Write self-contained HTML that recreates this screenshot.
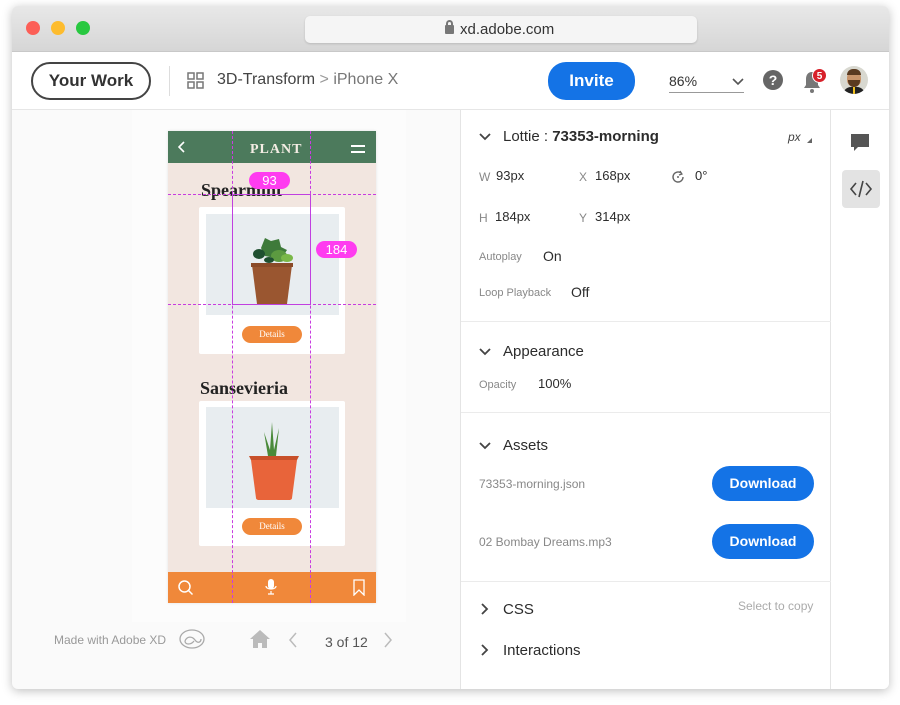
<!DOCTYPE html>
<html><head><style>
*{margin:0;padding:0;box-sizing:border-box}
body{width:900px;height:705px;background:#fff;font-family:"Liberation Sans",sans-serif;position:relative;overflow:hidden;color:#2c2c2c}
.a{position:absolute}
.win{left:12px;top:6px;width:877px;height:683px;border-radius:6px;box-shadow:0 2px 10px rgba(0,0,0,.25);overflow:hidden;background:#fafafa}
.t{font-size:13px;white-space:nowrap}
.lbl{color:#888;font-size:12px}
.btn{background:#1473e6;color:#fff;border-radius:18px;font-weight:bold;text-align:center}
.vd{width:0;border-left:1px dashed #c83ce0}
.hd{height:0;border-top:1px dashed #c83ce0}
</style></head><body>
<div class="a win">
 <div class="a" style="left:0;top:0;width:877px;height:46px;background:linear-gradient(#e8e8e8,#d6d6d6);border-bottom:1px solid #c8c8c8"></div>
 <div class="a" style="left:14px;top:15px;width:14px;height:14px;border-radius:7px;background:#fc5f57"></div>
 <div class="a" style="left:39px;top:15px;width:14px;height:14px;border-radius:7px;background:#fdbc2e"></div>
 <div class="a" style="left:64px;top:15px;width:14px;height:14px;border-radius:7px;background:#28c840"></div>
 <div class="a" style="left:293px;top:10px;width:392px;height:27px;border-radius:5px;background:#f5f5f5;box-shadow:0 1px 2px rgba(0,0,0,.15)"></div>
 <div class="a" style="left:433px;top:19px;width:9px;height:9px;background:#777;border-radius:1px"></div>
 <div class="a" style="left:434px;top:14px;width:7px;height:8px;border:2px solid #777;border-bottom:none;border-radius:4px 4px 0 0"></div>
 <div class="a t" style="left:448px;top:15px;font-size:15px;color:#333">xd.adobe.com</div>
 <div class="a" style="left:0;top:46px;width:877px;height:58px;background:#fff;border-bottom:1px solid #e6e6e6"></div>
 <div class="a" style="left:19px;top:56px;width:120px;height:38px;border:2px solid #444;border-radius:19px;text-align:center;line-height:34px;font-size:17px;font-weight:bold;color:#333">Your Work</div>
 <div class="a" style="left:157px;top:60px;width:1px;height:30px;background:#ddd"></div>
 <svg class="a" style="left:175px;top:66px" width="18" height="18"><g fill="none" stroke="#777" stroke-width="1.5"><rect x="1" y="1" width="6" height="6"/><rect x="10" y="1" width="6" height="6"/><rect x="1" y="10" width="6" height="6"/><rect x="10" y="10" width="6" height="6"/></g></svg>
 <div class="a t" style="left:205px;top:65px;font-size:16px;color:#444">3D-Transform <span style="color:#999">&gt;</span> <span style="color:#777">iPhone X</span></div>
 <div class="a btn" style="left:536px;top:56px;width:87px;height:38px;line-height:38px;font-size:17px">Invite</div>
 <div class="a t" style="left:657px;top:67px;font-size:14px;color:#333">86%</div>
 <div class="a" style="left:657px;top:86px;width:75px;height:1px;background:#999"></div>
 <svg class="a" style="left:720px;top:72px" width="12" height="8"><path d="M1 1l5 5 5-5" fill="none" stroke="#555" stroke-width="1.6"/></svg>
 <div class="a" style="left:751px;top:64px;width:20px;height:20px;border-radius:10px;background:#666;color:#fff;font-weight:bold;font-size:14px;text-align:center;line-height:20px">?</div>
 <svg class="a" style="left:790px;top:64px" width="20" height="24"><path d="M10 2c-4 0-6 3-6 7v6l-2 3h16l-2-3V9c0-4-2-7-6-7z" fill="#777"/><circle cx="10" cy="21" r="2" fill="#777"/></svg>
 <div class="a" style="left:800px;top:62px;width:15px;height:15px;border-radius:8px;background:#d7202a;color:#fff;font-size:10px;font-weight:bold;text-align:center;line-height:15px;border:1px solid #fff">5</div>
 <div class="a" style="left:828px;top:60px;width:28px;height:28px;border-radius:14px;background:#d8d8d0;overflow:hidden"><div class="a" style="left:7px;top:5px;width:14px;height:16px;border-radius:7px;background:#c8946a"></div><div class="a" style="left:7px;top:3px;width:14px;height:6px;border-radius:6px 6px 0 0;background:#5a3a20"></div><div class="a" style="left:8px;top:14px;width:12px;height:7px;border-radius:0 0 6px 6px;background:#5a3a20"></div><div class="a" style="left:3px;top:21px;width:22px;height:10px;border-radius:8px 8px 0 0;background:#222"></div><div class="a" style="left:13px;top:21px;width:2px;height:7px;background:#f0c020"></div></div>
 <div class="a" style="left:120px;top:104px;width:274px;height:512px;background:#fcfcfc"></div>
 <div class="a" style="left:156px;top:125px;width:208px;height:472px;background:#f2e6e0;box-shadow:0 0 3px rgba(0,0,0,.1)"></div>
 <div class="a" style="left:156px;top:125px;width:208px;height:32px;background:#4c7a5c"></div>
 <svg class="a" style="left:166px;top:135px" width="8" height="12"><path d="M6 1L1 6l5 5" fill="none" stroke="#fff" stroke-width="1.6"/></svg>
 <div class="a" style="left:238px;top:136px;font-family:'Liberation Serif',serif;color:#f4ede4;font-size:14px;font-weight:bold;letter-spacing:1px">PLANT</div>
 <div class="a" style="left:339px;top:139px;width:14px;height:1.5px;background:#fff;box-shadow:0 6px 0 #fff"></div>
 <div class="a" style="left:189px;top:174px;font-family:'Liberation Serif',serif;font-size:18px;font-weight:bold;color:#222">Spearmint</div>
 <div class="a" style="left:187px;top:201px;width:146px;height:147px;background:#fff;border-radius:2px"></div>
 <div class="a" style="left:194px;top:208px;width:133px;height:101px;background:#e8edf0"></div>
 <svg class="a" style="left:235px;top:228px" width="60" height="72"><path d="M5 31h40l-5 39H10z" fill="#9a5630"/><path d="M4 29h42v4H4z" fill="#8a4a28"/><path d="M18 4l6 3 8-2 2 8 6 3-4 6-8 2-10-2-4-8z" fill="#3e7a3a"/><ellipse cx="32" cy="22" rx="8" ry="6" fill="#5c9a40"/><ellipse cx="12" cy="20" rx="6" ry="5" fill="#1f5030"/><ellipse cx="40" cy="24" rx="6" ry="4" fill="#7ab848"/><ellipse cx="22" cy="26" rx="5" ry="3" fill="#1f5030"/></svg>
 <div class="a" style="left:230px;top:320px;width:60px;height:17px;border-radius:9px;background:#f0883a;color:#fff;font-family:'Liberation Serif',serif;font-size:9px;text-align:center;line-height:17px">Details</div>
 <div class="a" style="left:188px;top:372px;font-family:'Liberation Serif',serif;font-size:18px;font-weight:bold;color:#222">Sansevieria</div>
 <div class="a" style="left:187px;top:395px;width:146px;height:145px;background:#fff;border-radius:2px"></div>
 <div class="a" style="left:194px;top:401px;width:133px;height:101px;background:#e8edf0"></div>
 <svg class="a" style="left:234px;top:414px" width="56" height="80"><path d="M22 36L18 12 24 30 26 2 28 30 33 8 30 36z" fill="#4a8a3a"/><path d="M3 36h50l-2 4H5z" fill="#c8502a"/><path d="M5 40h46l-5 38c0 1-1 2-3 2H13c-2 0-3-1-3-2z" fill="#e8643a"/></svg>
 <div class="a" style="left:230px;top:512px;width:60px;height:17px;border-radius:9px;background:#f0883a;color:#fff;font-family:'Liberation Serif',serif;font-size:9px;text-align:center;line-height:17px">Details</div>
 <div class="a" style="left:156px;top:566px;width:208px;height:31px;background:#f0883a"></div>
 <svg class="a" style="left:165px;top:573px" width="18" height="18"><circle cx="7.5" cy="7.5" r="5.5" fill="none" stroke="#fff" stroke-width="1.5"/><path d="M11.5 11.5l4 4" stroke="#fff" stroke-width="1.5"/></svg>
 <svg class="a" style="left:253px;top:572px" width="12" height="18"><rect x="3" y="1" width="6" height="10" rx="3" fill="#fff"/><path d="M1 8c0 4 10 4 10 0M6 13v3M3 16h6" fill="none" stroke="#fff" stroke-width="1.2"/></svg>
 <svg class="a" style="left:341px;top:573px" width="12" height="17"><path d="M1 1h10v15l-5-5-5 5z" fill="none" stroke="#fff" stroke-width="1.3"/></svg>
 <div class="a vd" style="left:220px;top:125px;height:472px"></div>
 <div class="a vd" style="left:298px;top:125px;height:472px"></div>
 <div class="a hd" style="left:156px;top:188px;width:208px"></div>
 <div class="a hd" style="left:156px;top:298px;width:208px"></div>
 <div class="a" style="left:220px;top:188px;width:79px;height:111px;border:1px solid #c040e0"></div>
 <div class="a" style="left:237px;top:166px;width:41px;height:17px;border-radius:9px;background:#ff3cf0;color:#fff;font-size:13px;text-align:center;line-height:17px">93</div>
 <div class="a" style="left:304px;top:235px;width:41px;height:17px;border-radius:9px;background:#ff3cf0;color:#fff;font-size:13px;text-align:center;line-height:17px">184</div>
 <div class="a t" style="left:42px;top:627px;font-size:12px;color:#999">Made with Adobe XD</div>
 <svg class="a" style="left:166px;top:622px" width="28" height="22"><g fill="none" stroke="#aaa" stroke-width="1.3"><ellipse cx="14" cy="11" rx="12" ry="9"/><path d="M7 13c2-5 7-5 10-1s6 2 6-1M7 13c0 4 6 4 9 0"/></g></svg>
 <svg class="a" style="left:237px;top:623px" width="22" height="20"><path d="M11 1L1 10h3v9h5v-5h4v5h5v-9h3z" fill="#bbb"/></svg>
 <svg class="a" style="left:276px;top:626px" width="10" height="16"><path d="M8 1L2 8l6 7" fill="none" stroke="#bbb" stroke-width="1.5"/></svg>
 <div class="a t" style="left:313px;top:628px;font-size:14px;color:#555">3 of 12</div>
 <svg class="a" style="left:371px;top:626px" width="10" height="16"><path d="M2 1l6 7-6 7" fill="none" stroke="#bbb" stroke-width="1.5"/></svg>
 <div class="a" style="left:448px;top:104px;width:371px;height:579px;background:#fff;border-left:1px solid #e4e4e4;border-right:1px solid #e4e4e4"></div>
 <div class="a" style="left:819px;top:104px;width:58px;height:579px;background:#fff"></div>
 <svg class="a" style="left:467px;top:127px" width="12" height="8"><path d="M1 1l5 5 5-5" fill="none" stroke="#444" stroke-width="1.8"/></svg>
 <div class="a t" style="left:491px;top:122px;font-size:15px;color:#2c2c2c">Lottie : <b>73353-morning</b></div>
 <div class="a t" style="left:776px;top:124px;font-size:12px;font-style:italic;color:#444">px</div>
 <div class="a" style="left:795px;top:132px;border-left:5px solid transparent;border-bottom:5px solid #666"></div>
 <div class="a lbl" style="left:467px;top:164px">W</div><div class="a t" style="left:484px;top:162px">93px</div>
 <div class="a lbl" style="left:567px;top:164px">X</div><div class="a t" style="left:583px;top:162px">168px</div>
 <svg class="a" style="left:659px;top:164px" width="14" height="14"><path d="M12 7a5 5 0 1 1-2-4" fill="none" stroke="#666" stroke-width="1.4"/><path d="M9 1l2 3-3 1" fill="none" stroke="#666" stroke-width="1.2"/><circle cx="7" cy="7" r="1" fill="#666"/></svg>
 <div class="a t" style="left:683px;top:162px">0°</div>
 <div class="a lbl" style="left:467px;top:205px">H</div><div class="a t" style="left:483px;top:203px">184px</div>
 <div class="a lbl" style="left:567px;top:205px">Y</div><div class="a t" style="left:583px;top:203px">314px</div>
 <div class="a lbl" style="left:467px;top:245px;font-size:11px">Autoplay</div><div class="a t" style="left:531px;top:242px;font-size:14px">On</div>
 <div class="a lbl" style="left:467px;top:281px;font-size:11px">Loop Playback</div><div class="a t" style="left:559px;top:278px;font-size:14px">Off</div>
 <div class="a" style="left:449px;top:315px;width:370px;height:1px;background:#ebebeb"></div>
 <svg class="a" style="left:467px;top:342px" width="12" height="8"><path d="M1 1l5 5 5-5" fill="none" stroke="#444" stroke-width="1.8"/></svg>
 <div class="a t" style="left:491px;top:337px;font-size:15px">Appearance</div>
 <div class="a lbl" style="left:467px;top:373px;font-size:11px">Opacity</div><div class="a t" style="left:526px;top:370px">100%</div>
 <div class="a" style="left:449px;top:406px;width:370px;height:1px;background:#ebebeb"></div>
 <svg class="a" style="left:467px;top:436px" width="12" height="8"><path d="M1 1l5 5 5-5" fill="none" stroke="#444" stroke-width="1.8"/></svg>
 <div class="a t" style="left:491px;top:431px;font-size:15px">Assets</div>
 <div class="a t" style="left:467px;top:471px;font-size:12px;color:#888">73353-morning.json</div>
 <div class="a btn" style="left:700px;top:460px;width:102px;height:35px;line-height:35px;font-size:14px">Download</div>
 <div class="a t" style="left:467px;top:529px;font-size:12px;color:#888">02 Bombay Dreams.mp3</div>
 <div class="a btn" style="left:700px;top:518px;width:102px;height:35px;line-height:35px;font-size:14px">Download</div>
 <div class="a" style="left:449px;top:575px;width:370px;height:1px;background:#ebebeb"></div>
 <svg class="a" style="left:469px;top:597px" width="8" height="12"><path d="M1 1l5 5-5 5" fill="none" stroke="#444" stroke-width="1.8"/></svg>
 <div class="a t" style="left:491px;top:595px;font-size:15px">CSS</div>
 <div class="a t" style="left:726px;top:593px;font-size:12px;color:#aaa">Select to copy</div>
 <svg class="a" style="left:469px;top:638px" width="8" height="12"><path d="M1 1l5 5-5 5" fill="none" stroke="#444" stroke-width="1.8"/></svg>
 <div class="a t" style="left:491px;top:636px;font-size:15px">Interactions</div>
 <svg class="a" style="left:838px;top:127px" width="20" height="20"><path d="M1 1h18v13H8l-4 4v-4H1z" fill="#555"/></svg>
 <div class="a" style="left:830px;top:164px;width:38px;height:38px;border-radius:4px;background:#e3e3e3"></div>
 <svg class="a" style="left:837px;top:174px" width="24" height="18"><path d="M7 3L2 9l5 6M17 3l5 6-5 6M14 1l-4 16" fill="none" stroke="#444" stroke-width="1.6"/></svg>
</div>
</body></html>
